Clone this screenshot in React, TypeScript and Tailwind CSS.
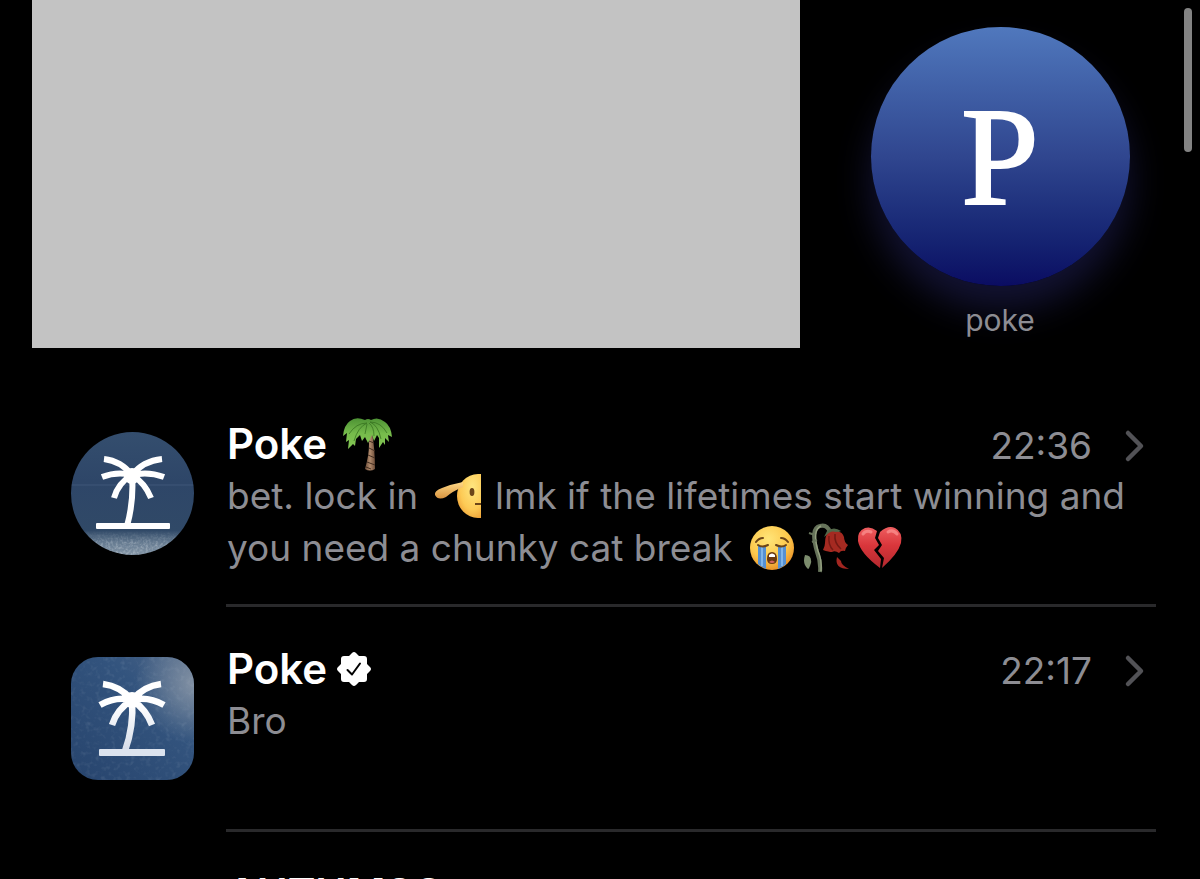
import type { ReactNode } from 'react';

function PalmEmoji() {
  return (
    <svg role="img" aria-label="palm tree" viewBox="0 0 52 54" className="ml-1 h-[54px] w-[52px] shrink-0">
      <defs>
        <linearGradient id="trunk" x1="0" x2="1">
          <stop offset="0" stopColor="#6b4b38" />
          <stop offset=".5" stopColor="#b08a6c" />
          <stop offset="1" stopColor="#6e4e3a" />
        </linearGradient>
        <linearGradient id="leaf" x1="0" y1="0" x2="0" y2="1">
          <stop offset="0" stopColor="#4d9234" />
          <stop offset=".5" stopColor="#76bb4b" />
          <stop offset="1" stopColor="#84c655" />
        </linearGradient>
      </defs>
      <path d="M27 16Q30 32 24 52Q29 55 34 52Q34 32 31 16Z" fill="url(#trunk)" />
      <path d="M28 24l5 2M28 31l6 3M27 38l7 3M26 45l8 3M25 50l5 2" stroke="#432e20" strokeWidth="1" />
      <path d="M24 3Q15-1 9 4Q3 8 2 19L6 16L5 25L8 23L7 32L12 27L14 29L15 22L19 18L21 24L24 20L27 26L31 18L33 24L36 18L38 21L38 31L42 25L44 28L44 21L48 25L47 18L51 20Q50 9 44 5Q37-1 30 3Q27 1 24 3Z" fill="url(#leaf)" />
      <path d="M26 6Q15 6 8 17M26 6Q17 10 13 24M26 7L24 17M28 6Q33 10 33 19M29 5Q37 8 40 22M29 5Q40 5 46 16" fill="none" stroke="#35701f" strokeWidth="1" opacity=".75" />
    </svg>
  );
}

function FaceGradient({ id }: { id: string }) {
  return (
    <radialGradient id={id} cx=".42" cy=".3" r=".75">
      <stop offset="0" stopColor="#ffe579" />
      <stop offset=".6" stopColor="#fdc84c" />
      <stop offset="1" stopColor="#e78a22" />
    </radialGradient>
  );
}

function HalfFaceEmoji() {
  return (
    <svg role="img" aria-label="saluting face" viewBox="0 0 48 46" className="mx-1 inline-block h-[46px] w-[48px] align-[-10px]">
      <defs>
        <radialGradient id="half" cx=".65" cy=".3" r=".85">
          <stop offset="0" stopColor="#ffe680" />
          <stop offset=".6" stopColor="#fdca55" />
          <stop offset="1" stopColor="#ea9630" />
        </radialGradient>
        <linearGradient id="arm" x1="0" y1="0" x2="0" y2="1">
          <stop offset="0" stopColor="#ffd987" />
          <stop offset="1" stopColor="#d9943f" />
        </linearGradient>
      </defs>
      <path d="M48 1H45A21 22 0 0 0 45 45H48Z" fill="url(#half)" />
      <path d="M30 9Q19 11 9 15Q1 18 2 22Q5 28 13 24Q20 18 30 14Z" fill="url(#arm)" />
      <ellipse cx="39" cy="19" rx="2.4" ry="3.9" fill="#6c4518" />
      <path d="M42 31H48" stroke="#6c4518" strokeWidth="2" />
    </svg>
  );
}

function CryEmoji() {
  return (
    <svg role="img" aria-label="crying face" viewBox="0 0 46 46" className="h-[46px] w-[46px]">
      <defs><FaceGradient id="cry" /></defs>
      <circle cx="23" cy="23" r="22" fill="url(#cry)" />
      <path d="M9 21H17V44Q12 42 9 39ZM29 21H37V39Q34 42 29 44Z" fill="#5590d2" />
      <path d="M13 22V41M33 22V41" stroke="#7fb5ea" strokeWidth="2" />
      <path d="M9 20Q13 23 19 20M27 20Q33 23 37 20M7 17Q10 13 14 13M32 13Q36 13 39 17" fill="none" stroke="#6c4518" strokeWidth="2" strokeLinecap="round" />
      <path d="M18 34Q18 27 23 27Q28 27 28 34Q28 39 23 39Q18 39 18 34Z" fill="#69380f" />
      <path d="M20 30Q23 27 26 30V32H20Z" fill="#fff" />
      <path d="M20 37Q23 34 26 37Q23 39 20 37Z" fill="#d56763" />
    </svg>
  );
}

function RoseEmoji() {
  return (
    <svg role="img" aria-label="wilted flower" viewBox="0 0 46 50" className="h-[50px] w-[46px]">
      <path d="M17 49Q18 39 14 29Q7 5 17 3Q24 1 27 9" fill="none" stroke="#66735a" strokeWidth="4" />
      <path d="M18 48Q19 37 15 28Q9 7 18 3" fill="none" stroke="#94a080" strokeWidth="1.5" />
      <path d="M6 10l6 2M9 19l5-2" stroke="#66735a" strokeWidth="2" />
      <path d="M24 8Q31 3 38 8Q34 9 34 12Q28 8 21 14Z" fill="#536849" />
      <path d="M23 13Q27 7 33 9Q39 8 41 14Q41 19 45 22Q43 24 42 28Q38 27 36 30Q32 27 29 29Q26 29 20 27Q22 23 22 20Q22 16 23 13Z" fill="#a52a21" />
      <path d="M26 13Q25 22 30 27M32 11Q31 20 38 26" fill="none" stroke="#741a14" strokeWidth="1.5" />
      <path d="M2 32Q9 32 8 40Q6 46 5 46Q-1 41 2 32Z" fill="#7c8c6d" />
      <path d="M34 34Q31 46 46 46Q38 42 38 38Z" fill="#a32620" />
    </svg>
  );
}

function HeartEmoji() {
  return (
    <svg role="img" aria-label="broken heart" viewBox="0 0 46 46" className="h-[46px] w-[46px]">
      <defs>
        <linearGradient id="heart" x1="0" y1="0" x2="0" y2="1">
          <stop offset="0" stopColor="#ee5d5f" />
          <stop offset=".45" stopColor="#d9363b" />
          <stop offset="1" stopColor="#b3282e" />
        </linearGradient>
      </defs>
      <path d="M20 6Q14 1 8 3Q0 6 1 16Q3 28 23 43L24 34L17 25L22 20L18 13Z" fill="url(#heart)" />
      <path d="M23 7Q31 0 38 3Q46 7 44 18Q41 29 25 43L27 33L21 26L25 20L21 13Z" fill="url(#heart)" />
      <path d="M6 9Q9 5 14 7M31 7Q36 4 40 9" fill="none" stroke="#ffa09c" strokeWidth="3" strokeLinecap="round" opacity=".6" />
    </svg>
  );
}

function RoundAvatar() {
  return (
    <svg role="img" aria-label="Poke" viewBox="0 0 123 123" className="size-[123px]">
      <defs>
        <linearGradient id="sea" x1="0" y1="0" x2="0" y2="1">
          <stop offset="0" stopColor="#344e6e" />
          <stop offset=".4" stopColor="#2e4668" />
          <stop offset=".8" stopColor="#304967" />
          <stop offset=".9" stopColor="#667b91" />
          <stop offset="1" stopColor="#8294a5" />
        </linearGradient>
        <linearGradient id="fade" x1="0" y1="0" x2="0" y2="1">
          <stop offset=".8" stopColor="#000" />
          <stop offset=".92" stopColor="#fff" />
        </linearGradient>
        <mask id="foam"><rect width="123" height="123" fill="url(#fade)" /></mask>
        <clipPath id="disc"><circle cx="61.500" cy="61.500" r="61.500" /></clipPath>
        <filter id="grain">
          <feTurbulence type="fractalNoise" baseFrequency=".4" numOctaves="2" seed="4" />
          <feColorMatrix values="0 0 0 0 .7  0 0 0 0 .75  0 0 0 0 .8  1.5 0 0 0 -.6" />
        </filter>
      </defs>
      <g clipPath="url(#disc)">
        <rect width="123" height="123" fill="url(#sea)" />
        <g mask="url(#foam)"><rect width="123" height="123" filter="url(#grain)" opacity=".6" /></g>
        <path d="M0 53H123" stroke="#5b7190" strokeWidth="2" opacity=".2" />
      </g>
      <g fill="none" stroke="#fff" strokeWidth="6">
        <path d="M61 43Q50 29 33 27M61 43Q72 29 91 27M61 43Q46 39 31 45M61 43Q77 39 93 45M61 43Q47 51 43 66M61 43Q74 51 80 66M61 43Q63 69 56 94" strokeLinejoin="round" />
      </g>
      <circle cx="61" cy="44" r="8" fill="#fff" />
      <rect x="25" y="91" width="74" height="6" rx="1" fill="#fff" />
    </svg>
  );
}

function SquareAvatar() {
  return (
    <svg role="img" aria-label="Poke" viewBox="0 0 123 123" className="size-[123px]">
      <defs>
        <linearGradient id="sky" x1="0" y1="1" x2="1" y2="0">
          <stop offset="0" stopColor="#27446d" />
          <stop offset=".65" stopColor="#33547e" />
          <stop offset="1" stopColor="#4d6688" />
        </linearGradient>
        <radialGradient id="glow" cx="1" cy=".22" r=".48">
          <stop offset="0" stopColor="#aab1b8" stopOpacity=".6" />
          <stop offset="1" stopColor="#aab1b8" stopOpacity="0" />
        </radialGradient>
        <linearGradient id="white" x1="0" y1="0" x2="0" y2="1">
          <stop offset=".3" stopColor="#fff" />
          <stop offset="1" stopColor="#d5dce8" />
        </linearGradient>
        <clipPath id="tile"><rect width="123" height="123" rx="27" /></clipPath>
        <filter id="speckle">
          <feTurbulence type="fractalNoise" baseFrequency=".2" numOctaves="2" seed="7" />
          <feColorMatrix values="0 0 0 0 .65  0 0 0 0 .73  0 0 0 0 .8  2 0 0 0 -1" />
        </filter>
      </defs>
      <g clipPath="url(#tile)">
        <rect width="123" height="123" fill="url(#sky)" />
        <rect width="123" height="123" fill="url(#glow)" />
        <rect width="123" height="123" filter="url(#speckle)" opacity=".14" />
      </g>
      <path d="M61 43Q49 29 32 27M61 43Q73 29 90 27M61 43Q45 39 29 48M61 43Q77 39 93 48M61 43Q46 52 41 68M61 43Q75 52 81 68M61 43Q63 69 54 94" fill="none" stroke="url(#white)" strokeWidth="6.500" strokeLinejoin="round" />
      <circle cx="61" cy="43" r="8" fill="#fff" />
      <rect x="28" y="92" width="66" height="7" rx="1" fill="#dce3ee" />
    </svg>
  );
}

function Verified() {
  return (
    <svg role="img" aria-label="Verified" viewBox="0 0 34 34" className="size-[34px]">
      <path d="M15 1Q17-1 19 1L22 4H27Q30 4 30 7V12L33 15Q35 17 33 19L30 22V27Q30 30 27 30H22L19 33Q17 35 15 33L12 30H7Q4 30 4 27V22L1 19Q-1 17 1 15L4 12V7Q4 4 7 4H12Z" fill="#fff" />
      <path d="M10.500 18L15 22.500L23 11.500" fill="none" stroke="#000" strokeWidth="2" strokeLinecap="round" strokeLinejoin="round" />
    </svg>
  );
}

type RowProps = { avatar?: ReactNode; title: string; badge?: ReactNode; time?: string; children?: ReactNode };

function Conversation({ avatar, title, badge, time, children }: RowProps) {
  return (
    <li className="flex h-[225px] pl-[71px] pr-11">
      <div className="w-[155px] shrink-0 pt-[50px]">{avatar}</div>
      <div className="min-w-0 flex-1 border-b-[3px] border-[#29292b] pt-[35px]">
        <div className="flex h-[53px] items-center pl-px">
          <h2 className="text-[42px] font-semibold leading-[53px] text-white">{title}</h2>
          <span className="ml-2.5 flex items-center">{badge}</span>
          {time && (
            <a href="#conversation" aria-label={'Open ' + title} className="ml-auto flex items-center gap-8 pr-2.5 pt-1 text-[37px] leading-[53px] text-[#8d8d93]">
              <time>{time}</time>
              <svg viewBox="0 0 22 34" className="h-[34px] w-[22px]">
                <path d="M4 4L17 17L4 30" fill="none" stroke="#525256" strokeWidth="4.500" strokeLinecap="round" strokeLinejoin="round" />
              </svg>
            </a>
          )}
        </div>
        <div className="pl-px text-[37px] leading-[52px] text-[#8d8d93]">{children}</div>
      </div>
    </li>
  );
}

export default function App() {
  return (
    <main className="relative h-screen overflow-hidden bg-black font-['Inter','Liberation_Sans',sans-serif]">
      <section className="flex h-[382px] pl-8">
        <div className="h-[348px] w-2/3 max-w-[768px] bg-[#c3c3c3]" />
        <div className="flex flex-1 flex-col items-center pt-[27px]">
          <div className="flex size-[259px] items-center justify-center rounded-full bg-linear-to-b from-[#5078bd] via-[#30468f] to-[#0b0c62] shadow-[0_24px_36px_rgba(55,55,145,0.35)]">
            <span className="font-['Liberation_Serif',serif] text-[140px] leading-none text-white [-webkit-text-stroke:2px_white]">P</span>
          </div>
          <p className="mt-4 text-[30px] leading-9 text-[#8d8d93]">poke</p>
        </div>
      </section>
      <ul>
        <Conversation avatar={<RoundAvatar />} title="Poke" badge={<PalmEmoji />} time="22:36">
          <p className="h-[52px] whitespace-nowrap">bet. lock in <HalfFaceEmoji /> lmk if the lifetimes start winning and</p>
          <p className="flex h-[52px] items-center whitespace-nowrap">
            you need a chunky cat break
            <span className="ml-4 flex items-center gap-2"><CryEmoji /><RoseEmoji /><HeartEmoji /></span>
          </p>
        </Conversation>
        <Conversation avatar={<SquareAvatar />} title="Poke" badge={<Verified />} time="22:17">
          <p>Bro</p>
        </Conversation>
        <Conversation title="AUTHMSG" />
      </ul>
      <div className="absolute right-2 top-2 h-36 w-2 rounded-full bg-[#838383]" />
    </main>
  );
}
